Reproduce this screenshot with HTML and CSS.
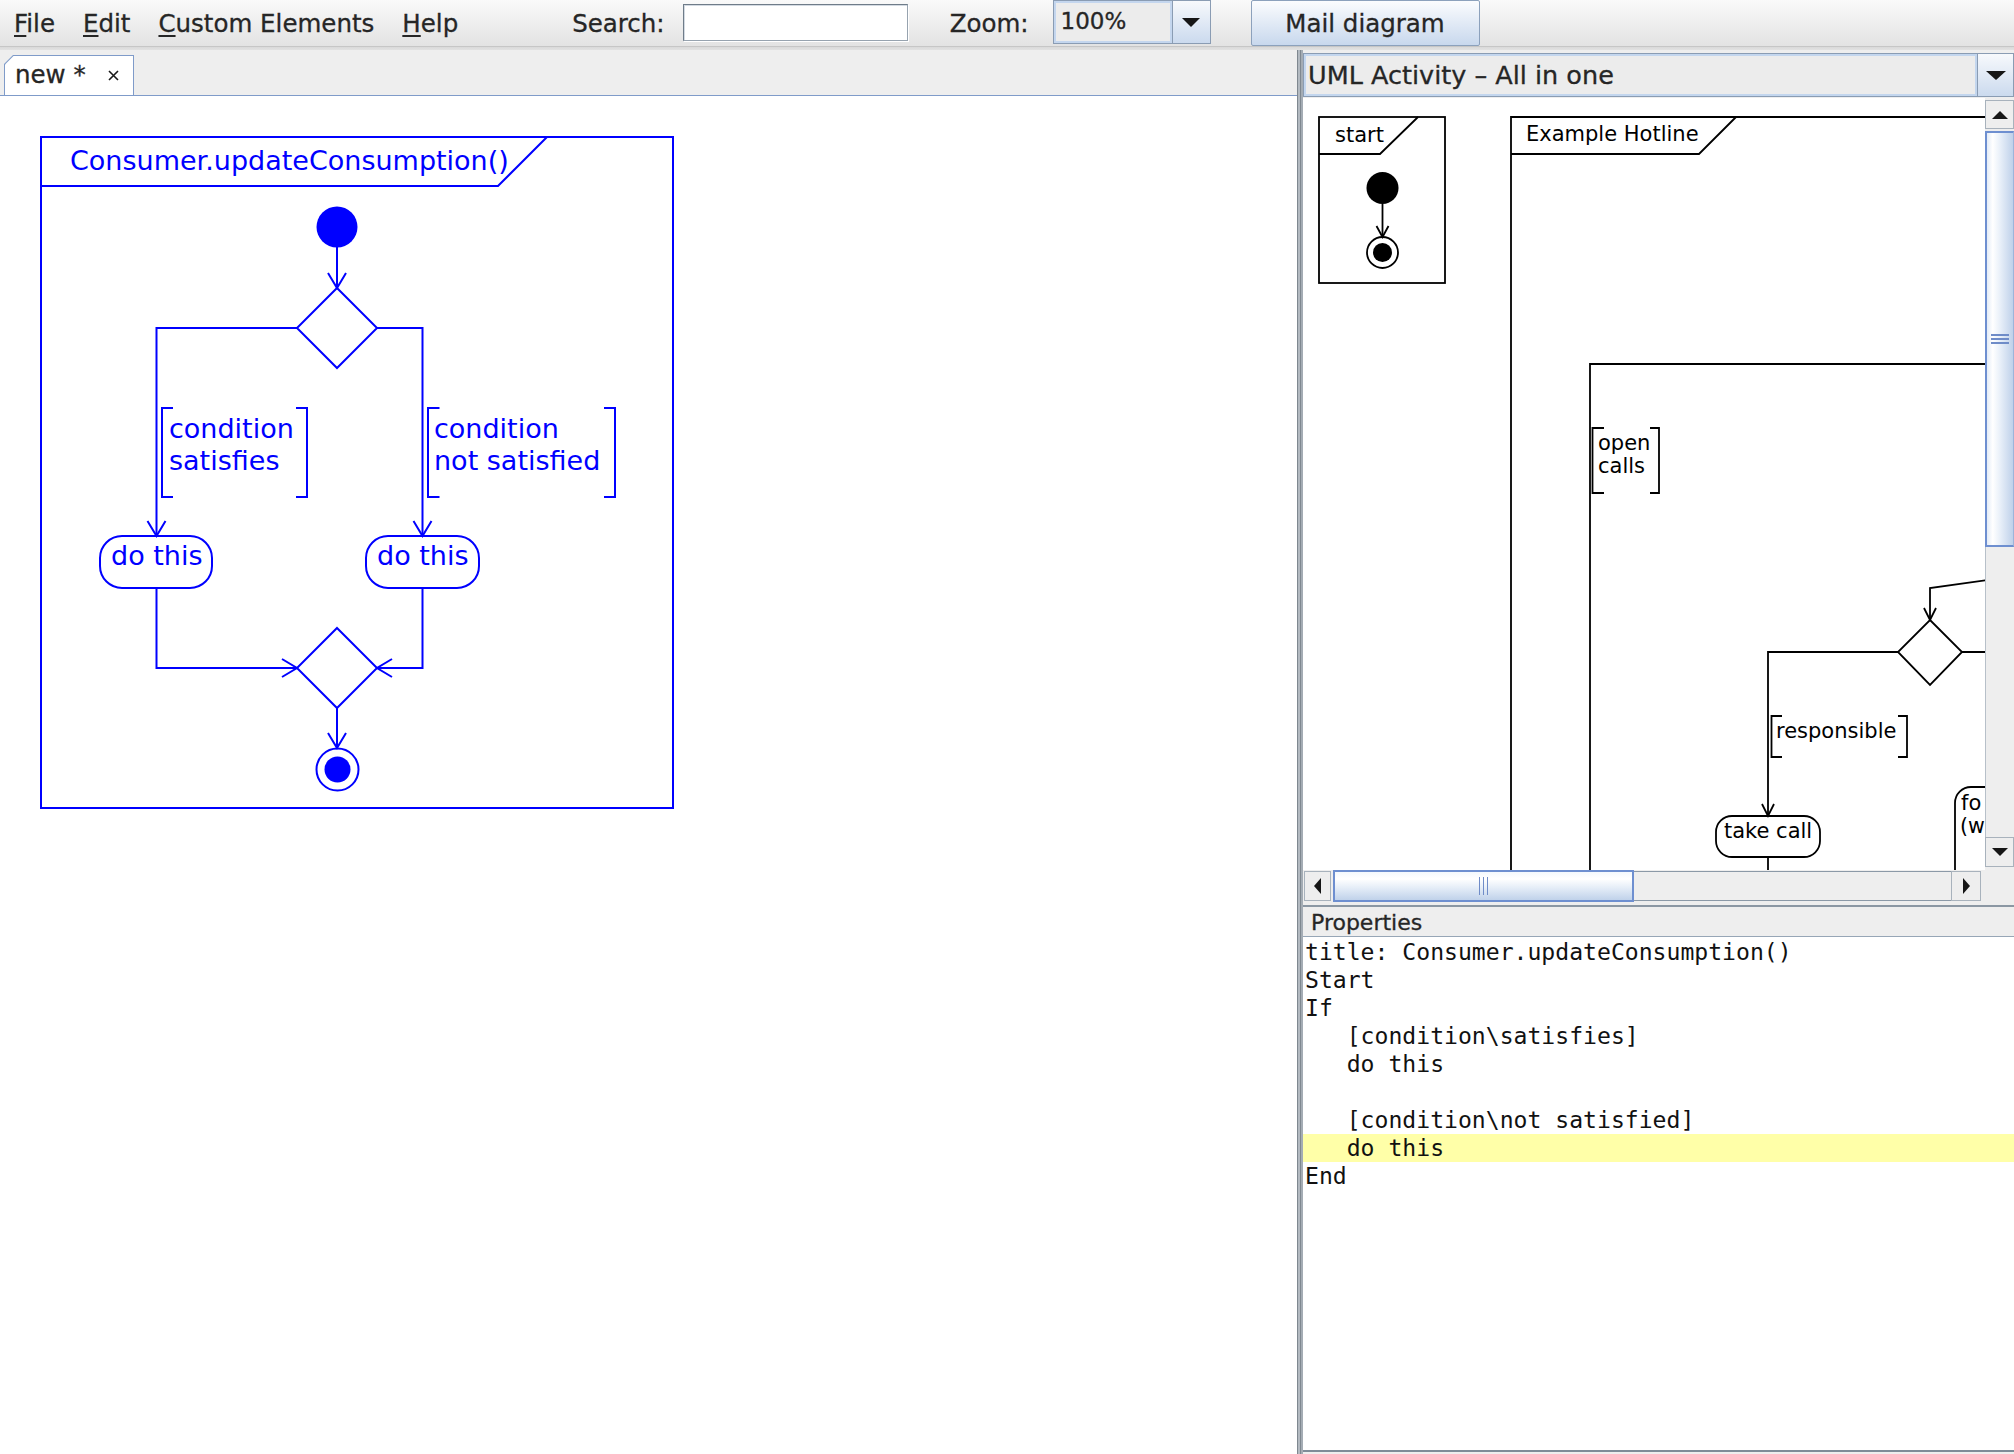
FILE: index.html
```html
<!DOCTYPE html>
<html lang="en">
<head>
<meta charset="utf-8">
<title>UMLet – new *</title>
<link rel="stylesheet" href="styles.css">
</head>
<body>
<div class="app">
  <header class="menubar">
    <nav class="menus">
      <span class="menu"><u>F</u>ile</span>
      <span class="menu"><u>E</u>dit</span>
      <span class="menu"><u>C</u>ustom Elements</span>
      <span class="menu"><u>H</u>elp</span>
    </nav>
    <span class="tool-label search-label">Search:</span>
    <div class="search-box"></div>
    <span class="tool-label zoom-label">Zoom:</span>
    <div class="zoom-combo">
      <span class="zoom-value">100%</span>
      <span class="combo-btn zoom-btn"><span class="tri-down"></span></span>
    </div>
    <div class="mail-btn">Mail diagram</div>
  </header>

  <div class="workspace">
    <section class="editor">
      <div class="tabstrip">
        <div class="tab">
          <div class="tab-inner">
            <span class="tab-title">new *</span>
            <svg class="tab-close" width="11" height="11" viewBox="0 0 11 11"><path d="M1 1L10 10M10 1L1 10"/></svg>
          </div>
        </div>
      </div>
      <div class="canvas">
        <svg class="diagram" width="700" height="740" viewBox="0 96 700 740">
          <g class="stroke-blue">
            <rect x="41" y="137" width="632" height="671"/>
            <polyline points="41,186 498,186 547,137"/>
            <line x1="337" y1="247" x2="337" y2="288"/>
            <polyline points="328,273 337,288 346,273"/>
            <polygon points="337,288 377,328 337,368 297,328"/>
            <polyline points="297,328 156.5,328 156.5,536"/>
            <polyline points="147.5,521 156.5,536 165.5,521"/>
            <polyline points="377,328 422.5,328 422.5,536"/>
            <polyline points="413.5,521 422.5,536 431.5,521"/>
            <path d="M173 408H162V497H173M296 408H307V497H296"/>
            <path d="M439.5 408H428V497H439.5M604 408H615V497H604"/>
            <rect x="100" y="536" width="112" height="52" rx="22"/>
            <rect x="366" y="536" width="113" height="52" rx="22"/>
            <polyline points="156.5,588 156.5,668 297,668"/>
            <polyline points="282,659 297,668 282,677"/>
            <polyline points="422.5,588 422.5,668 377,668"/>
            <polyline points="392,659 377,668 392,677"/>
            <polygon points="337,628 377,668 337,708 297,668"/>
            <line x1="337" y1="708" x2="337" y2="748"/>
            <polyline points="328,733 337,748 346,733"/>
            <circle cx="337.5" cy="769.5" r="21"/>
          </g>
          <g class="fill-blue">
            <circle cx="337" cy="227" r="20.5"/>
            <circle cx="337.5" cy="769.5" r="13"/>
          </g>
          <g class="dtext-blue">
            <text x="70" y="170">Consumer.updateConsumption()</text>
            <text x="169" y="438">condition</text>
            <text x="169" y="470">satisfies</text>
            <text x="434" y="438">condition</text>
            <text x="434" y="470">not satisfied</text>
            <text x="111" y="565">do this</text>
            <text x="377" y="565">do this</text>
          </g>
        </svg>
      </div>
    </section>

    <div class="splitter"></div>

    <aside class="sidebar">
      <div class="palette-combo">
        <span class="palette-name">UML Activity – All in one</span>
        <span class="combo-btn palette-btn"><span class="tri-down big"></span></span>
      </div>

      <div class="preview">
        <div class="viewport">
          <svg class="diagram" width="682" height="772" viewBox="1303 98 682 772">
            <g class="stroke-black">
              <rect x="1319" y="117" width="126" height="166"/>
              <polyline points="1319,154 1380,154 1418,117"/>
              <line x1="1382.5" y1="204" x2="1382.5" y2="237"/>
              <polyline points="1376.5,226 1382.5,237 1388.5,226"/>
              <circle cx="1382.5" cy="252.5" r="15.5"/>
              <polyline points="1995,117 1511,117 1511,880"/>
              <polyline points="1511,154 1699,154 1736,117"/>
              <polyline points="1995,364 1590,364 1590,880"/>
              <path d="M1604 428H1592.5V493H1604M1650 428H1659V493H1650"/>
              <polyline points="1995,579 1930,588 1930,620"/>
              <polyline points="1924,608 1930,620 1936,608"/>
              <polygon points="1930,620 1962,652 1930,685 1898,652"/>
              <line x1="1962" y1="652" x2="1995" y2="652"/>
              <polyline points="1898,652 1768,652 1768,816"/>
              <polyline points="1762,804 1768,816 1774,804"/>
              <path d="M1782 716H1771.5V757H1782M1898 716H1907V757H1898"/>
              <rect x="1716" y="816" width="104" height="41" rx="16"/>
              <line x1="1768" y1="857" x2="1768" y2="880"/>
              <rect x="1955" y="787" width="90" height="140" rx="16"/>
            </g>
            <g class="fill-black">
              <circle cx="1382.5" cy="188" r="16"/>
              <circle cx="1382.5" cy="252.5" r="9.5"/>
            </g>
            <g class="dtext-black">
              <text x="1335" y="142">start</text>
              <text x="1526" y="141">Example Hotline</text>
              <text x="1598" y="450">open</text>
              <text x="1598" y="473">calls</text>
              <text x="1776" y="738">responsible</text>
              <text x="1724" y="838">take call</text>
              <text x="1961" y="810">fo</text>
              <text class="clip-label" x="1960" y="833">(w</text>
            </g>
          </svg>
        </div>
        <div class="vscroll">
          <div class="sb-btn v-btn"><span class="tri-up"></span></div>
          <div class="v-thumb"><span class="grip-h"></span><span class="grip-h"></span><span class="grip-h"></span></div>
          <div class="v-track"></div>
          <div class="sb-btn v-btn"><span class="tri-down small"></span></div>
        </div>
        <div class="hscroll">
          <div class="sb-btn h-btn"><span class="tri-left"></span></div>
          <div class="h-thumb"><span class="grip-v"></span><span class="grip-v"></span><span class="grip-v"></span></div>
          <div class="h-track"></div>
          <div class="sb-btn h-btn"><span class="tri-right"></span></div>
        </div>
        <div class="corner"></div>
      </div>

      <div class="props-header">Properties</div>
      <div class="props-text">
        <div class="code-line">title: Consumer.updateConsumption()</div>
        <div class="code-line">Start</div>
        <div class="code-line">If</div>
        <div class="code-line">   [condition\satisfies]</div>
        <div class="code-line">   do this</div>
        <div class="code-line"> </div>
        <div class="code-line">   [condition\not satisfied]</div>
        <div class="code-line current">   do this</div>
        <div class="code-line">End</div>
      </div>
    </aside>
  </div>
</div>
</body>
</html>
```

FILE: styles.css
```css
* { box-sizing: border-box; }
html, body { margin: 0; padding: 0; }
body {
  width: 2014px;
  height: 1454px;
  overflow: hidden;
  background: #eeeeee;
  font-family: "DejaVu Sans", "Noto Sans", sans-serif;
  color: #262626;
}
.app { display: flex; flex-direction: column; height: 1454px; }

/* ---------- menu bar ---------- */
.menubar {
  display: flex;
  align-items: flex-start;
  height: 50px;
  flex: none;
  font-size: 24.5px;
  line-height: 28px;
  -webkit-text-stroke: 0.3px #262626;
  background: linear-gradient(to bottom, #fafafa 0, #e3e3e3 46px, #c6c6c6 46px, #c6c6c6 47px, #d9d9d9 47px, #e2e2e2 50px);
}
.menus { display: flex; }
.menu { padding: 10px 14px 0; white-space: nowrap; }
.menu u { text-decoration-thickness: 2px; text-underline-offset: 3px; }
.tool-label { padding-top: 10px; white-space: nowrap; }
.search-label { margin-left: 100px; }
.search-box {
  margin-left: 18px;
  margin-top: 4px;
  width: 225px;
  height: 37px;
  background: #ffffff;
  border: 1px solid #97a3af;
  border-top-color: #6f7c89;
  border-left-color: #6f7c89;
  box-shadow: inset 1px 1px 0 #d3dae2, 1px 1px 0 #ffffff;
}
.zoom-label { margin-left: 42px; }
.zoom-combo {
  margin-left: 24px;
  width: 158px;
  height: 44px;
  display: flex;
  border: 1px solid #8a9cb3;
  background: #ececec;
}
.zoom-value {
  flex: 1;
  padding: 6px 0 0 7px;
  font-size: 23px;
  line-height: 28px;
  box-shadow: inset 0 0 0 2px #c4d6ee;
}
.combo-btn {
  display: flex;
  align-items: center;
  justify-content: center;
  border-left: 1px solid #8a9cb3;
  background: linear-gradient(to bottom, #f7f9fc, #cbdaee);
}
.zoom-btn { width: 38px; }
.tri-down {
  width: 0; height: 0;
  border-left: 9px solid transparent;
  border-right: 9px solid transparent;
  border-top: 9px solid #161616;
}
.tri-down.big { border-left-width: 10px; border-right-width: 10px; border-top-width: 9px; }
.tri-down.small { border-left-width: 8px; border-right-width: 8px; border-top-width: 8px; }
.tri-up {
  width: 0; height: 0;
  border-left: 8px solid transparent;
  border-right: 8px solid transparent;
  border-bottom: 8px solid #161616;
}
.tri-left {
  width: 0; height: 0;
  border-top: 8px solid transparent;
  border-bottom: 8px solid transparent;
  border-right: 7px solid #161616;
}
.tri-right {
  width: 0; height: 0;
  border-top: 8px solid transparent;
  border-bottom: 8px solid transparent;
  border-left: 7px solid #161616;
}
.mail-btn {
  margin-left: 40px;
  width: 229px;
  height: 46px;
  padding-top: 9px;
  text-align: center;
  border: 1px solid #8ca1bc;
  border-radius: 2px;
  background: linear-gradient(to bottom, #fbfcfe, #c8d8ed);
  white-space: nowrap;
}

/* ---------- workspace ---------- */
.workspace { display: flex; flex: 1; min-height: 0; }
.editor { width: 1297px; display: flex; flex-direction: column; background: #ffffff; }
.tabstrip {
  height: 46px;
  flex: none;
  display: flex;
  padding: 5px 0 0 4px;
  background: #eeeeee;
  border-bottom: 1px solid #7f9bc9;
}
.tab {
  width: 130px;
  height: 40px;
  padding: 1px 1px 0 1px;
  background: #7f9bc9;
  clip-path: polygon(9px 0, 100% 0, 100% 100%, 0 100%, 0 9px);
}
.tab-inner {
  height: 100%;
  display: flex;
  align-items: flex-start;
  padding: 5px 0 0 10px;
  background: #ffffff;
  clip-path: polygon(8.5px 0, 100% 0, 100% 100%, 0 100%, 0 8.5px);
  font-size: 24.5px;
  line-height: 28px;
  -webkit-text-stroke: 0.3px #262626;
}
.tab-title { white-space: pre; }
.tab-close { margin: 9px 0 0 22px; fill: none; stroke: #1a1a1a; stroke-width: 1.6; }
.canvas { flex: 1; background: #ffffff; overflow: hidden; }
.diagram { display: block; }

.stroke-blue { fill: none; stroke: #0000ff; stroke-width: 2; }
.fill-blue { fill: #0000ff; }
.dtext-blue { fill: #0000ff; font-family: "DejaVu Sans", sans-serif; font-size: 27px; }
.stroke-black { fill: none; stroke: #000000; stroke-width: 1.8; }
.fill-black { fill: #000000; }
.dtext-black { fill: #000000; font-family: "DejaVu Sans", sans-serif; font-size: 21px; }
.dtext-black .clip-label { font-size: 20.5px; }

.splitter {
  width: 4px;
  flex: none;
  background: #b3bac1;
  border-left: 1px solid #7f8890;
  border-right: 1px solid #7f8890;
}

/* ---------- sidebar ---------- */
.sidebar {
  width: 713px;
  flex: none;
  display: flex;
  flex-direction: column;
  background: #eeeeee;
  border-left: 2px solid #a4acb4;
}
.palette-combo {
  display: flex;
  height: 44px;
  margin-top: 3px;
  margin-bottom: 1px;
  flex: none;
  border: 1px solid #8a9cb3;
}
.palette-name {
  flex: 1;
  padding: 7px 0 0 4px;
  font-size: 25.5px;
  line-height: 28px;
  background: #ececec;
  box-shadow: inset 0 0 0 2px #c3d6ee;
  white-space: nowrap;
  -webkit-text-stroke: 0.3px #262626;
}
.palette-btn { width: 36px; }

.preview {
  display: grid;
  grid-template-columns: 682px 29px;
  grid-template-rows: 772px 32px;
  flex: none;
}
.viewport { background: #ffffff; overflow: hidden; }
.vscroll {
  display: flex;
  flex-direction: column;
  padding: 2px 0 3px;
  background: #eeeeee;
}
.sb-btn {
  display: flex;
  align-items: center;
  justify-content: center;
  background: #eeeeee;
  border: 1px solid #a8b2bc;
  flex: none;
}
.v-btn { height: 29px; }
.v-btn:last-child { height: 30px; }
.v-thumb {
  height: 416px;
  margin-top: 2px;
  flex: none;
  display: flex;
  flex-direction: column;
  align-items: center;
  justify-content: center;
  gap: 2.5px;
  border: 2px solid #6e8fd0;
  border-right: 1px solid #9db4da;
  background: linear-gradient(to right, #e4ecf7, #ffffff 22%, #e9f0f9 50%, #bfd1ea);
}
.grip-h { display: block; width: 18px; height: 1.5px; background: #6f8cc8; }
.v-track { flex: 1; background: #eeeeee; border-left: 1px solid #b7c0c9; }

.hscroll {
  display: flex;
  align-items: stretch;
  padding: 0 4px 0 1px;
  background: #eeeeee;
}
.h-btn { width: 27px; margin: 1px 0; }
.h-btn:last-child { width: 30px; }
.h-thumb {
  width: 301px;
  margin-left: 2px;
  flex: none;
  display: flex;
  align-items: center;
  justify-content: center;
  gap: 2.5px;
  border: 2px solid #6e8fd0;
  background: linear-gradient(to bottom, #f4f8fd, #ffffff 25%, #e6eef8 55%, #c0d2ea);
}
.grip-v { display: block; width: 1.5px; height: 18px; background: #6f8cc8; }
.h-track {
  flex: 1;
  margin: 1px 0;
  background: #eeeeee;
  border-top: 1px solid #8b99a7;
  border-bottom: 1px solid #8b99a7;
}
.corner { background: #eeeeee; }

.props-header {
  margin-top: 3px;
  height: 32px;
  flex: none;
  padding: 2px 0 0 8px;
  font-size: 22px;
  line-height: 28px;
  -webkit-text-stroke: 0.3px #262626;
  border-top: 2px solid #8b97a3;
  border-bottom: 1px solid #97a6b6;
  background: #eeeeee;
}
.props-text {
  flex: 1;
  margin-bottom: 2px;
  padding: 1px 0 0 0;
  background: #ffffff;
  border-bottom: 2px solid #7f8c98;
  font-family: "DejaVu Sans Mono", "Liberation Mono", monospace;
  font-size: 23.1px;
  line-height: 28px;
  color: #111111;
}
.code-line { white-space: pre; padding-left: 2px; height: 28px; }
.code-line.current { background: #ffffa8; }
```
